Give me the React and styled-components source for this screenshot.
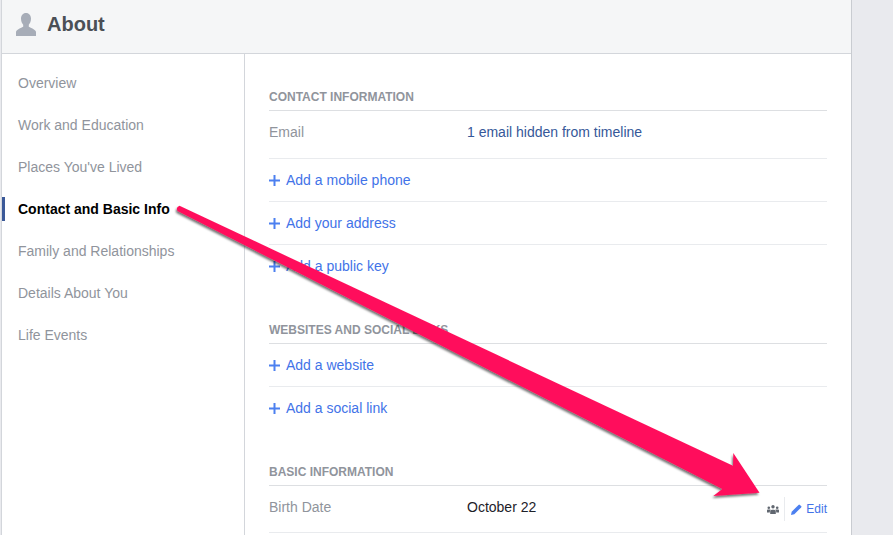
import React from "react";
import styled, { createGlobalStyle } from "styled-components";

const navItems = [
  "Overview",
  "Work and Education",
  "Places You've Lived",
  "Contact and Basic Info",
  "Family and Relationships",
  "Details About You",
  "Life Events",
];

const PlusMark = () => (
  <PlusIcon viewBox="0 0 11 11">
    <path d="M4.500 0h2v4.500H11v2H6.500V11h-2V6.500H0v-2h4.500z" />
  </PlusIcon>
);

const App = () => {
  return (
    <>
      <GlobalStyle />
      <Page>
        <Panel>
          <Header>
            <PersonIcon viewBox="0 0 20 23">
              <path d="M10 0c3.200 0 5 2.500 5 5.600 0 2.700-1 4.900-2.200 6.200v1.900c1.100.9 6.300 2.300 7.200 5V23H0v-4.300c.9-2.700 6.100-4.100 7.200-5v-1.900C6 10.500 5 8.300 5 5.600 5 2.500 6.800 0 10 0z" />
            </PersonIcon>
            <Title>About</Title>
          </Header>
          <Body>
            <Sidebar>
              {navItems.map((item) => (
                <NavItem key={item} $active={item === "Contact and Basic Info"}>
                  {item}
                </NavItem>
              ))}
            </Sidebar>
            <Main>
              <Section>
                <SectionTitle>CONTACT INFORMATION</SectionTitle>
                <InfoRow>
                  <Label>Email</Label>
                  <EmailValue>1 email hidden from timeline</EmailValue>
                </InfoRow>
                <AddRow><PlusMark />Add a mobile phone</AddRow>
                <AddRow><PlusMark />Add your address</AddRow>
                <AddRow $last><PlusMark />Add a public key</AddRow>
              </Section>
              <Section>
                <SectionTitle>WEBSITES AND SOCIAL LINKS</SectionTitle>
                <AddRow><PlusMark />Add a website</AddRow>
                <AddRow $last><PlusMark />Add a social link</AddRow>
              </Section>
              <Section>
                <SectionTitle>BASIC INFORMATION</SectionTitle>
                <InfoRow $compact>
                  <Label>Birth Date</Label>
                  <Value>October 22</Value>
                  <Actions>
                    <FriendsIcon viewBox="0 0 12 9">
                      <circle cx="1.800" cy="2.800" r="1.300" />
                      <circle cx="6" cy="1.700" r="1.700" />
                      <circle cx="10.200" cy="2.800" r="1.300" />
                      <path d="M0 7.500V5.400c0-.6.500-1 1-1h1.800c.3 0 .6.100.8.300-.5.500-.8 1.200-.8 2v.8zM3.200 9V6.600c0-1 .8-1.800 1.800-1.800h2c1 0 1.800.8 1.800 1.800V9zM12 7.500V5.400c0-.6-.5-1-1-1H9.200c-.3 0-.6.100-.8.300.5.500.8 1.200.8 2v.8z" />
                    </FriendsIcon>
                    <EditLink>
                      <PencilIcon viewBox="0 0 11 11">
                        <path d="M0 11l.7-3.300L7.500.9a1 1 0 0 1 1.400 0l1.200 1.200a1 1 0 0 1 0 1.400L3.300 10.300z" />
                      </PencilIcon>
                      Edit
                    </EditLink>
                  </Actions>
                </InfoRow>
              </Section>
            </Main>
          </Body>
        </Panel>
        <ArrowOverlay viewBox="0 0 893 535">
          <defs>
            <filter id="arrowShadow" x="-5%" y="-5%" width="110%" height="110%">
              <feDropShadow dx="-1" dy="2" stdDeviation="1" floodColor="#000" floodOpacity="0.55" />
            </filter>
          </defs>
          <path
            d="M179.500 205.800 L733 465.700 L733.300 453 L759.500 492.700 L713.300 496 L722.300 489 L177.500 211 Q175.500 207.500 179.500 205.800 Z"
            fill="#ff0f5b"
            filter="url(#arrowShadow)"
          />
        </ArrowOverlay>
      </Page>
    </>
  );
};

export default App;

const GlobalStyle = createGlobalStyle`
  html, body {
    margin: 0;
    height: 100%;
    overflow: hidden;
    background: #e9eaee;
  }
  body {
    font-family: "Liberation Sans", Arial, sans-serif;
  }
`;

const Page = styled.div`
  position: relative;
  width: 893px;
  height: 535px;
  overflow: hidden;
`;

const Panel = styled.div`
  box-sizing: border-box;
  width: 851px;
  margin-left: 1px;
  height: 535px;
  background: #fff;
  border-left: 1px solid #d3d6db;
  border-right: 1px solid #c9ccd1;
`;

const Header = styled.div`
  box-sizing: border-box;
  height: 54px;
  display: flex;
  align-items: center;
  background: #f5f6f7;
  border-bottom: 1px solid #d3d6db;
  padding: 0 0 5px 14px;
`;

const PersonIcon = styled.svg`
  width: 20px;
  height: 23px;
  fill: #a7adb8;
  margin-right: 11px;
`;

const Title = styled.h1`
  margin: 0;
  font-size: 20px;
  font-weight: bold;
  line-height: 24px;
  color: #4b4f56;
`;

const Body = styled.div`
  display: flex;
  height: 481px;
`;

const Sidebar = styled.div`
  box-sizing: border-box;
  width: 243px;
  flex-shrink: 0;
  border-right: 1px solid #d3d6db;
  padding-top: 8px;
`;

const NavItem = styled.div`
  box-sizing: border-box;
  height: 42px;
  display: flex;
  align-items: center;
  padding-left: 16px;
  font-size: 14px;
  color: ${(p) => (p.$active ? "#000" : "#90949c")};
  font-weight: ${(p) => (p.$active ? "bold" : "normal")};
  position: relative;

  &::before {
    content: "";
    display: ${(p) => (p.$active ? "block" : "none")};
    position: absolute;
    left: 0;
    top: 9px;
    width: 3px;
    height: 24px;
    background: #3b5998;
  }
`;

const Main = styled.div`
  flex: 1;
  padding: 34px 24px 0 24px;
`;

const Section = styled.div`
  margin-bottom: 33px;
`;

const SectionTitle = styled.div`
  height: 22px;
  font-size: 12px;
  font-weight: bold;
  line-height: 18px;
  color: #90949c;
  border-bottom: 1px solid #dddfe2;
`;

const InfoRow = styled.div`
  box-sizing: border-box;
  height: ${(p) => (p.$compact ? "47px" : "48px")};
  display: flex;
  align-items: center;
  padding-bottom: ${(p) => (p.$compact ? "4px" : "6px")};
  font-size: 14px;
  border-bottom: 1px solid #e9ebee;
`;

const Label = styled.div`
  width: 198px;
  color: #90949c;
`;

const Value = styled.div`
  color: #1d2129;
`;

const EmailValue = styled(Value)`
  color: #365899;
`;

const AddRow = styled.div`
  box-sizing: border-box;
  height: 43px;
  display: flex;
  align-items: center;
  font-size: 14px;
  color: #4273e8;
  border-bottom: 1px solid ${(p) => (p.$last ? "transparent" : "#e9ebee")};
`;

const PlusIcon = styled.svg`
  width: 11px;
  height: 11px;
  fill: #4c80f0;
  margin: 0 6px 0 0;
`;

const Actions = styled.div`
  margin-left: auto;
  display: flex;
  align-items: center;
  height: 24px;
  margin-top: 4px;
`;

const FriendsIcon = styled.svg`
  width: 12px;
  height: 9px;
  fill: #616770;
  margin-right: 5px;
`;

const EditLink = styled.div`
  display: flex;
  align-items: center;
  height: 24px;
  padding-left: 6px;
  border-left: 1px solid #e9ebee;
  font-size: 12px;
  color: #4273e8;
`;

const PencilIcon = styled.svg`
  width: 11px;
  height: 11px;
  fill: #4c80f0;
  margin-right: 4px;
`;

const ArrowOverlay = styled.svg`
  position: absolute;
  left: 0;
  top: 0;
  width: 893px;
  height: 535px;
  pointer-events: none;
`;
